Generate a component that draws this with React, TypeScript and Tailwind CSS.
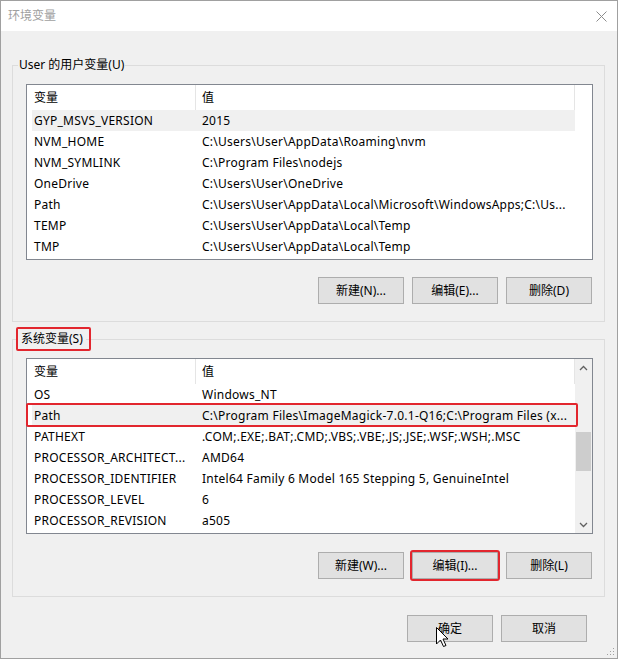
import React from "react"

const userVars = [
  ["GYP_MSVS_VERSION", "2015"],
  ["NVM_HOME", "C:\\Users\\User\\AppData\\Roaming\\nvm"],
  ["NVM_SYMLINK", "C:\\Program Files\\nodejs"],
  ["OneDrive", "C:\\Users\\User\\OneDrive"],
  ["Path", "C:\\Users\\User\\AppData\\Local\\Microsoft\\WindowsApps;C:\\Us..."],
  ["TEMP", "C:\\Users\\User\\AppData\\Local\\Temp"],
  ["TMP", "C:\\Users\\User\\AppData\\Local\\Temp"],
]

const systemVars = [
  ["OS", "Windows_NT"],
  ["Path", "C:\\Program Files\\ImageMagick-7.0.1-Q16;C:\\Program Files (x..."],
  ["PATHEXT", ".COM;.EXE;.BAT;.CMD;.VBS;.VBE;.JS;.JSE;.WSF;.WSH;.MSC"],
  ["PROCESSOR_ARCHITECT...", "AMD64"],
  ["PROCESSOR_IDENTIFIER", "Intel64 Family 6 Model 165 Stepping 5, GenuineIntel"],
  ["PROCESSOR_LEVEL", "6"],
  ["PROCESSOR_REVISION", "a505"],
]

function Row({ name, value, selected, marked }: { name: string; value: string; selected?: boolean; marked?: boolean }) {
  return (
    <div className={`relative flex h-[21px] items-center ml-[5px] tracking-[0.25px] ${selected ? "bg-[#f0f0f0]" : ""}`}>
      <div className="w-[163px] pl-[2px] whitespace-nowrap overflow-hidden">{name}</div>
      <div className="flex-1 pl-[7px] whitespace-nowrap overflow-hidden">{value}</div>
      {marked && (
        <span className="absolute -left-[6px] -right-[3px] -top-[2px] -bottom-[1px] border-2 border-[#e2262e] rounded-[2px]" />
      )}
    </div>
  )
}

function VarList({ rows, selected, marked, scroll }: { rows: string[][]; selected?: number; marked?: number; scroll?: boolean }) {
  return (
    <div className="flex h-[176px] border border-[#828790] bg-white">
      <div className="flex-1 flex flex-col">
        <div className="flex h-[25px]">
          <div className="w-[169px] pl-[7px] flex items-center border-r border-[#e5e5e5]">变量</div>
          <div className="flex-1 pl-[6px] flex items-center border-r border-[#e5e5e5]">值</div>
        </div>
        {rows.map(([n, v], i) => (
          <Row key={n} name={n} value={v} selected={i === selected} marked={i === marked} />
        ))}
      </div>
      {scroll ? (
        <div className="w-[17px] bg-[#f0f0f0] flex flex-col">
          <div className="h-[17px] flex items-center justify-center">
            <svg width="9" height="6" viewBox="0 0 9 6">
              <polyline points="1,5 4.5,1.5 8,5" fill="none" stroke="#606060" strokeWidth="1.3" />
            </svg>
          </div>
          <div className="flex-1 pt-[56px] px-[1px]">
            <div className="h-[39px] bg-[#cdcdcd]" />
          </div>
          <div className="h-[17px] flex items-center justify-center">
            <svg width="9" height="6" viewBox="0 0 9 6">
              <polyline points="1,1 4.5,4.5 8,1" fill="none" stroke="#606060" strokeWidth="1.3" />
            </svg>
          </div>
        </div>
      ) : (
        <div className="w-[17px]" />
      )}
    </div>
  )
}

function WinButton({ label, marked }: { label: string; marked?: boolean }) {
  return (
    <div className="relative w-[86px] h-[27px] bg-[#e1e1e1] border border-[#adadad] flex items-center justify-center">
      {label}
      {marked && <span className="absolute -inset-[3px] border-2 border-[#e2262e] rounded-[3px]" />}
    </div>
  )
}

export default function App() {
  return (
    <div className="relative w-[618px] h-[659px] bg-[#f0f0f0] border border-[#a0a0a0] flex flex-col text-[12px] leading-[16px] text-black font-['Noto_Sans','Noto_Sans_CJK_SC',sans-serif]">
      {/* Title bar */}
      <div className="h-[30px] bg-white flex items-center justify-between pl-[7px] pr-[10px] text-[#a0a0a0]">
        <span>环境变量</span>
        <svg width="11" height="11" viewBox="0 0 11 11">
          <path d="M0.5 0.5 L10.5 10.5 M10.5 0.5 L0.5 10.5" stroke="#8c8c8c" strokeWidth="1" />
        </svg>
      </div>

      <div className="flex-1 flex flex-col pl-[11px] pr-[12px] pt-[26px]">
        {/* User variables */}
        <fieldset className="border border-[#dcdcdc]">
          <legend className="ml-[5px] px-[1px]">User 的用户变量(U)</legend>
          <div className="pl-[13px] pr-[11px] pt-[11px] pb-[17px]">
            <VarList rows={userVars} selected={0} />
            <div className="mt-[17px] flex justify-end gap-[8px] pr-[1px]">
              <WinButton label="新建(N)..." />
              <WinButton label="编辑(E)..." />
              <WinButton label="删除(D)" />
            </div>
          </div>
        </fieldset>

        {/* System variables */}
        <fieldset className="mt-[9px] border border-[#dcdcdc]">
          <legend className="relative ml-[5px] px-[3px]">
            系统变量(S)
            <span className="absolute -left-[2px] -right-[5px] -top-[4px] -bottom-[4px] border-2 border-[#e2262e] rounded-[2px]" />
          </legend>
          <div className="pl-[13px] pr-[11px] pt-[11px] pb-[17px]">
            <VarList rows={systemVars} selected={1} marked={1} scroll />
            <div className="mt-[18px] flex justify-end gap-[8px] pr-[1px]">
              <WinButton label="新建(W)..." />
              <WinButton label="编辑(I)..." marked />
              <WinButton label="删除(L)" />
            </div>
          </div>
        </fieldset>

        <div className="mt-[18px] flex justify-end gap-[8px] pr-[18px]">
          <WinButton label="确定" />
          <WinButton label="取消" />
        </div>
      </div>

      {/* mouse cursor */}
      <svg className="absolute left-[435px] top-[626px]" width="13" height="21" viewBox="0 0 13 21">
        <path d="M0.5 0.5 L0.5 17 L4.5 13 L7.5 19.5 L10 18.5 L7 12 L12 12 Z" fill="white" stroke="black" strokeWidth="1" />
      </svg>

      {/* resize grip */}
      <svg className="absolute right-[2px] bottom-[2px]" width="8" height="8" viewBox="0 0 8 8">
        <rect x="6" y="0" width="1" height="1" fill="#a0a0a0" />
        <rect x="3" y="3" width="1" height="1" fill="#a0a0a0" />
        <rect x="6" y="3" width="1" height="1" fill="#a0a0a0" />
        <rect x="0" y="6" width="1" height="1" fill="#a0a0a0" />
        <rect x="3" y="6" width="1" height="1" fill="#a0a0a0" />
        <rect x="6" y="6" width="1" height="1" fill="#a0a0a0" />
      </svg>
    </div>
  )
}
